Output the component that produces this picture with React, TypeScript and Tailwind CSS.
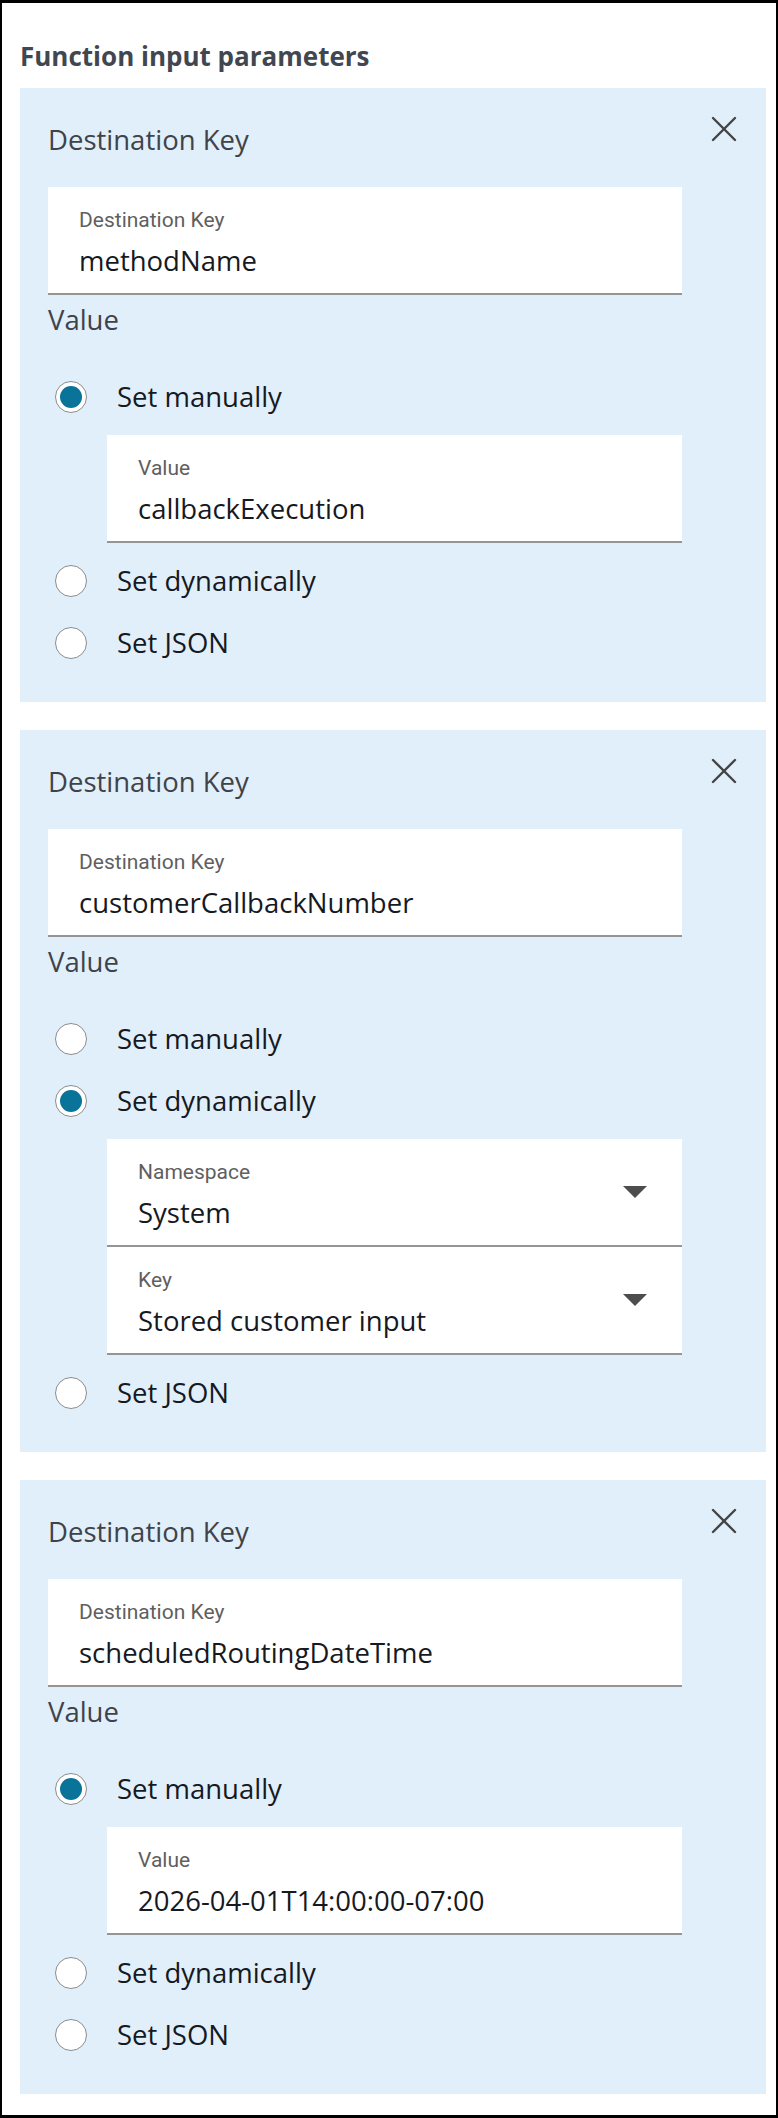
import React from "react";

type Mode = "manual" | "dynamic" | "json";

interface Param {
  destinationKey: string;
  mode: Mode;
  value?: string;
  namespace?: string;
  key?: string;
}

const params: Param[] = [
  { destinationKey: "methodName", mode: "manual", value: "callbackExecution" },
  {
    destinationKey: "customerCallbackNumber",
    mode: "dynamic",
    namespace: "System",
    key: "Stored customer input",
  },
  {
    destinationKey: "scheduledRoutingDateTime",
    mode: "manual",
    value: "2026-04-01T14:00:00-07:00",
  },
];

const CloseIcon = () => (
  <svg width="26" height="26" viewBox="0 0 26 26" className="block">
    <line x1="2" y1="2" x2="24" y2="24" stroke="#444" strokeWidth="2.4" strokeLinecap="round" />
    <line x1="24" y1="2" x2="2" y2="24" stroke="#444" strokeWidth="2.4" strokeLinecap="round" />
  </svg>
);

const Field = ({
  label,
  value,
  className = "",
  dropdown = false,
}: {
  label: string;
  value: string;
  className?: string;
  dropdown?: boolean;
}) => (
  <div
    className={`h-[108px] bg-white border-b-2 border-[#959595] flex items-center justify-between pl-[31px] pr-[35px] ${className}`}
  >
    <div className="flex flex-col self-start pt-[21px]">
      <span className="font-['Roboto',sans-serif] text-[21px] leading-[24px] text-[#5f5f5f]">
        {label}
      </span>
      <span className="mt-[13px] text-[27.5px] leading-[32px] text-[#16191f]">{value}</span>
    </div>
    {dropdown && (
      <svg width="24" height="12" viewBox="0 0 24 12" className="block">
        <polygon points="0,0 24,0 12,12" fill="#4d4d4d" />
      </svg>
    )}
  </div>
);

const Radio = ({ label, checked }: { label: string; checked: boolean }) => (
  <div className="h-[48px] flex items-center pl-[7px]">
    <span className="w-[32px] h-[32px] rounded-full border border-[#8c8c8c] bg-white flex items-center justify-center">
      {checked && <span className="w-[22px] h-[22px] rounded-full bg-[#0a7399]" />}
    </span>
    <span className="ml-[30px] text-[27.5px] leading-[32px] text-[#16191f]">{label}</span>
  </div>
);

const ParamCard = ({ p }: { p: Param }) => (
  <div className="bg-[#e1effb] ml-[18px] mr-[10px] pl-[28px] pr-[29px] pb-[35px]">
    <div className="h-[99px] flex justify-between items-start">
      <h3 className="pt-[36px] text-[27.5px] leading-[32px] text-[#3f4349]">Destination Key</h3>
      <button className="mt-[28px]">
        <CloseIcon />
      </button>
    </div>
    <Field label="Destination Key" value={p.destinationKey} className="w-[634px]" />
    <p className="mt-[9px] text-[27.5px] leading-[32px] text-[#3f4349]">Value</p>
    <div className="mt-[37px] flex flex-col gap-[14px]">
      <Radio label="Set manually" checked={p.mode === "manual"} />
      {p.mode === "manual" && (
        <Field label="Value" value={p.value ?? ""} className="ml-[59px] w-[575px]" />
      )}
      <Radio label="Set dynamically" checked={p.mode === "dynamic"} />
      {p.mode === "dynamic" && (
        <div className="ml-[59px] w-[575px] flex flex-col">
          <Field label="Namespace" value={p.namespace ?? ""} dropdown />
          <Field label="Key" value={p.key ?? ""} dropdown />
        </div>
      )}
      <Radio label="Set JSON" checked={p.mode === "json"} />
    </div>
  </div>
);

export default function App() {
  return (
    <div className="w-[778px] h-[2118px] bg-white border-x-2 border-y-[3px] border-black font-['Open_Sans',sans-serif]">
      <h2 className="pt-[37px] pl-[18px] text-[26px] leading-[32px] font-bold text-[#414750]">
        Function input parameters
      </h2>
      <div className="mt-[16px] flex flex-col gap-[28px]">
        {params.map((p) => (
          <ParamCard key={p.destinationKey} p={p} />
        ))}
      </div>
    </div>
  );
}
